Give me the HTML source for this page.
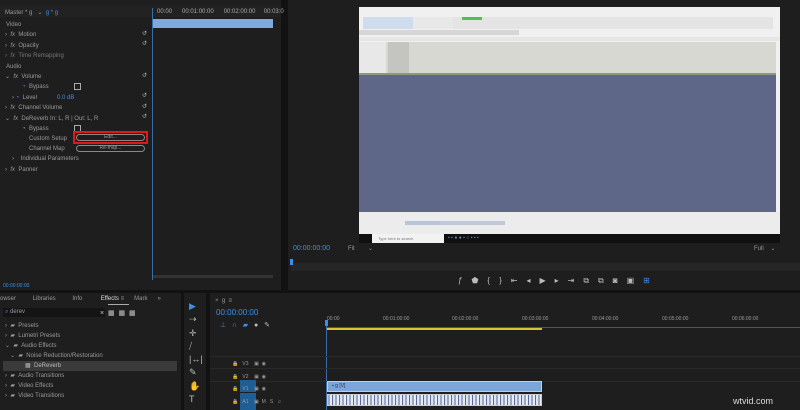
<!DOCTYPE html>
<html><head><meta charset="utf-8"><style>
*{margin:0;padding:0;box-sizing:border-box}
body{width:800px;height:410px;background:#121212;position:relative;overflow:hidden;font-family:"Liberation Sans",sans-serif;font-size:6px;color:#9a9a9a}
div{position:absolute}
.t{white-space:nowrap}
.b{color:#3d8ee6}
</style></head><body>
<!-- effect controls -->
<div style="left:0;top:0;width:281px;height:290px;background:#1e1e1e"></div>
<div style="left:0;top:6px;width:281px;height:11px;background:#222"></div>
<div class="t" style="left:5px;top:9px">Master * g &nbsp;&nbsp;⌄ &nbsp;<span class="b">g * g</span></div>
<div class="t" style="left:157px;top:9px;color:#aaa">00:00 &nbsp;&nbsp;&nbsp;&nbsp; 00:01:00:00 &nbsp;&nbsp;&nbsp;&nbsp; 00:02:00:00 &nbsp;&nbsp;&nbsp; 00:03:0</div>
<div style="left:153px;top:19px;width:120px;height:9px;background:#7fa9dc"></div>
<div style="left:152px;top:8px;width:1px;height:272px;background:#3b6ea8"></div>
<div style="left:0;top:20px;width:150px;height:172px;line-height:10.4px">
<div class="t" style="left:6px;top:0">Video</div>
<div class="t" style="left:5px;top:10px">› &nbsp;<i>fx</i> &nbsp;Motion</div>
<div class="t" style="left:5px;top:21px">› &nbsp;<i>fx</i> &nbsp;Opacity</div>
<div class="t" style="left:5px;top:31px;color:#777">› &nbsp;<i>fx</i> &nbsp;Time Remapping</div>
<div class="t" style="left:6px;top:42px">Audio</div>
<div class="t" style="left:5px;top:52px">⌄ &nbsp;<i>fx</i> &nbsp;Volume</div>
<div class="t" style="left:22px;top:62px"><span class="b">◔</span> &nbsp;Bypass</div>
<div class="t" style="left:12px;top:73px">› <span class="b">◔</span> &nbsp;Level &nbsp;&nbsp;&nbsp;&nbsp;&nbsp;&nbsp;&nbsp;&nbsp;&nbsp;&nbsp;&nbsp;<span class="b">0.0 dB</span></div>
<div class="t" style="left:5px;top:83px">› &nbsp;<i>fx</i> &nbsp;Channel Volume</div>
<div class="t" style="left:5px;top:94px">⌄ &nbsp;<i>fx</i> &nbsp;DeReverb In: L, R | Out: L, R</div>
<div class="t" style="left:22px;top:104px">◔ &nbsp;Bypass</div>
<div class="t" style="left:29px;top:114px">Custom Setup</div>
<div class="t" style="left:29px;top:124px">Channel Map</div>
<div class="t" style="left:12px;top:134px">› &nbsp;&nbsp;&nbsp;Individual Parameters</div>
<div class="t" style="left:5px;top:145px">› &nbsp;<i>fx</i> &nbsp;Panner</div>
</div>
<div style="left:74px;top:83px;width:7px;height:7px;border:1px solid #aaa"></div>
<div style="left:74px;top:125px;width:7px;height:7px;border:1px solid #aaa"></div>
<div style="left:73px;top:131px;width:75px;height:13px;border:2px solid #e01818"></div>
<div style="left:76px;top:134px;width:69px;height:7px;border:1px solid #888;border-radius:4px;text-align:center;line-height:5px;font-size:5px">Edit...</div>
<div style="left:76px;top:145px;width:69px;height:7px;border:1px solid #888;border-radius:4px;text-align:center;line-height:5px;font-size:5px">Re-map...</div>
<div class="t" style="left:142px;top:29px;line-height:10.4px;color:#bbb">↺<br>↺<br><br><br>↺<br><br>↺<br>↺<br>↺</div>
<div style="left:153px;top:275px;width:120px;height:3px;background:#333"></div>
<div class="t b" style="left:3px;top:283px;font-size:5px">00:00:00:00</div>
<!-- program monitor -->
<div style="left:288px;top:0;width:512px;height:290px;background:#1e1e1e"></div>
<div style="left:359px;top:7px;width:421px;height:228px;background:#f0f0f0"></div>
<div style="left:363px;top:17px;width:410px;height:12px;background:#e4e4e4"></div>
<div style="left:363px;top:17px;width:50px;height:12px;background:#cfdcee"></div>
<div style="left:413px;top:17px;width:40px;height:12px;background:#e8e8e8"></div>
<div style="left:462px;top:17px;width:20px;height:3px;background:#4fbf4f"></div>
<div style="left:359px;top:30px;width:160px;height:5px;background:#d6d6d6"></div>
<div style="left:359px;top:37px;width:421px;height:4px;background:#e6e6e6"></div>
<div style="left:359px;top:42px;width:417px;height:33px;background:#d8d8d2"></div>
<div style="left:359px;top:42px;width:27px;height:33px;background:#e8e8e8"></div>
<div style="left:388px;top:42px;width:21px;height:31px;background:#c4c4c0"></div>
<div style="left:359px;top:73px;width:417px;height:2px;background:#8a9a7a"></div>
<div style="left:359px;top:75px;width:417px;height:137px;background:#5e6787"></div>
<div style="left:359px;top:212px;width:421px;height:22px;background:#ececec"></div>
<div style="left:405px;top:221px;width:35px;height:4px;background:#b8c4d8"></div>
<div style="left:440px;top:221px;width:65px;height:4px;background:#c0c8d8"></div>
<div style="left:359px;top:234px;width:421px;height:9px;background:#101010"></div>
<div style="left:372px;top:234px;width:72px;height:9px;background:#f2f2f2;color:#777;font-size:4px;line-height:9px;padding-left:6px" class="t">Type here to search</div>
<div class="t" style="left:448px;top:235px;font-size:5px;color:#68a">▪ ▪ ● ● ▪ ○ ▪ ▪ ▪</div>
<div class="t b" style="left:293px;top:245px;font-size:7px">00:00:00:00</div>
<div class="t" style="left:348px;top:245px;font-size:6px">Fit &nbsp;&nbsp;&nbsp;&nbsp;&nbsp;&nbsp;&nbsp;⌄</div>
<div class="t" style="left:754px;top:245px;font-size:6px">Full &nbsp;&nbsp;&nbsp;⌄</div>
<div style="left:291px;top:263px;width:509px;height:8px;background:#262626"></div>
<div style="left:290px;top:259px;width:3px;height:6px;background:#3d8ee6"></div>
<div class="t" style="left:458px;top:276px;font-size:8px;color:#bbb;letter-spacing:9px">ƒ⬟{}⇤◂▶▸⇥⧉⧉◙▣<span class="b">⊞</span></div>
<!-- bottom left effects -->
<div style="left:0;top:293px;width:181px;height:117px;background:#1e1e1e"></div>
<div class="t" style="left:0;top:296px;word-spacing:0">owser &nbsp;&nbsp;&nbsp;&nbsp;&nbsp;&nbsp;&nbsp;&nbsp; Libraries &nbsp;&nbsp;&nbsp;&nbsp;&nbsp;&nbsp;&nbsp;&nbsp; Info &nbsp;&nbsp;&nbsp;&nbsp;&nbsp;&nbsp;&nbsp;&nbsp;&nbsp; <span style="color:#ddd">Effects</span> ≡ &nbsp;&nbsp;&nbsp;&nbsp; Mark &nbsp;&nbsp;&nbsp;&nbsp; »</div>
<div style="left:108px;top:304px;width:21px;height:1px;background:#aaa"></div>
<div style="left:3px;top:308px;width:102px;height:9px;background:#141414"></div>
<div class="t" style="left:5px;top:309px"><span class="b">⌕</span> derev</div>
<div class="t" style="left:100px;top:309px;color:#ccc;font-size:7px">× &nbsp;▦ &nbsp;▦ &nbsp;▦</div>
<div style="left:3px;top:361px;width:174px;height:10px;background:#3a3a3a"></div>
<div style="left:0;top:321px;line-height:10px">
<div class="t" style="left:5px;top:0">› &nbsp;▰ &nbsp;Presets</div>
<div class="t" style="left:5px;top:10px">› &nbsp;▰ &nbsp;Lumetri Presets</div>
<div class="t" style="left:5px;top:20px">⌄ &nbsp;▰ &nbsp;Audio Effects</div>
<div class="t" style="left:10px;top:30px">⌄ &nbsp;▰ &nbsp;Noise Reduction/Restoration</div>
<div class="t" style="left:25px;top:40px;color:#bbb">▦ &nbsp;DeReverb</div>
<div class="t" style="left:5px;top:50px">› &nbsp;▰ &nbsp;Audio Transitions</div>
<div class="t" style="left:5px;top:60px">› &nbsp;▰ &nbsp;Video Effects</div>
<div class="t" style="left:5px;top:70px">› &nbsp;▰ &nbsp;Video Transitions</div>
</div>
<!-- tools -->
<div style="left:184px;top:293px;width:22px;height:117px;background:#1e1e1e"></div>
<div class="t" style="left:189px;top:300px;font-size:9px;line-height:13.3px;color:#bbb"><span class="b">▶</span><br>⇢<br>✛<br>⧸<br>|↔|<br>✎<br>✋<br>T</div>
<!-- timeline -->
<div style="left:210px;top:293px;width:590px;height:117px;background:#1e1e1e"></div>
<div class="t" style="left:215px;top:298px">× &nbsp;g &nbsp;≡</div>
<div class="t b" style="left:216px;top:308px;font-size:8px">00:00:00:00</div>
<div class="t b" style="left:220px;top:321px;font-size:7px">⊥ &nbsp;&nbsp;∩ &nbsp;&nbsp;▰ &nbsp;&nbsp;<span style="color:#bbb">● &nbsp;&nbsp;✎</span></div>
<div class="t" style="left:327px;top:316px;font-size:5px">00:00</div>
<div class="t" style="left:383px;top:316px;font-size:5px">00:01:00:00</div>
<div class="t" style="left:452px;top:316px;font-size:5px">00:02:00:00</div>
<div class="t" style="left:522px;top:316px;font-size:5px">00:03:00:00</div>
<div class="t" style="left:592px;top:316px;font-size:5px">00:04:00:00</div>
<div class="t" style="left:662px;top:316px;font-size:5px">00:05:00:00</div>
<div class="t" style="left:732px;top:316px;font-size:5px">00:06:00:00</div>
<div style="left:326px;top:327px;width:474px;height:1px;background:#555"></div>
<div style="left:326px;top:328px;width:216px;height:1.5px;background:#d6c62a"></div>
<div style="left:325px;top:320px;width:3px;height:6px;background:#3d8ee6"></div>
<div style="left:326px;top:326px;width:1px;height:84px;background:#3b6ea8"></div>
<div style="left:210px;top:356px;width:590px;height:1px;background:#2a2a2a"></div>
<div style="left:210px;top:368px;width:590px;height:1px;background:#2a2a2a"></div>
<div style="left:210px;top:381px;width:590px;height:1px;background:#2a2a2a"></div>
<div style="left:240px;top:380px;width:16px;height:12px;background:#1f5e95"></div>
<div style="left:240px;top:393px;width:16px;height:17px;background:#1f5e95"></div>
<div class="t" style="left:232px;top:358px;line-height:12.5px;font-size:5px">🔒 &nbsp;&nbsp;V3 &nbsp;&nbsp;&nbsp;▣ &nbsp;◉<br>🔒 &nbsp;&nbsp;V2 &nbsp;&nbsp;&nbsp;▣ &nbsp;◉<br>🔒 &nbsp;&nbsp;V1 &nbsp;&nbsp;&nbsp;▣ &nbsp;◉<br>🔒 &nbsp;&nbsp;A1 &nbsp;&nbsp;&nbsp;▣ &nbsp;M &nbsp;&nbsp;S &nbsp;&nbsp;♫</div>
<div style="left:327px;top:381px;width:215px;height:11px;background:#7aa6dc;border:1px solid #ccc"></div>
<div class="t" style="left:332px;top:383px;font-size:5px;color:#333">▪ g [V]</div>
<div style="left:327px;top:394px;width:215px;height:12px;background:repeating-linear-gradient(90deg,#9aa8c8 0 2px,#e8ecf4 2px 4px,#5a6a9a 4px 5px,#dfe4ef 5px 7px);border:1px solid #ccc"></div>
<div class="t" style="left:733px;top:396px;font-size:9px;color:#ddd">wtvid.com</div>
</body></html>
